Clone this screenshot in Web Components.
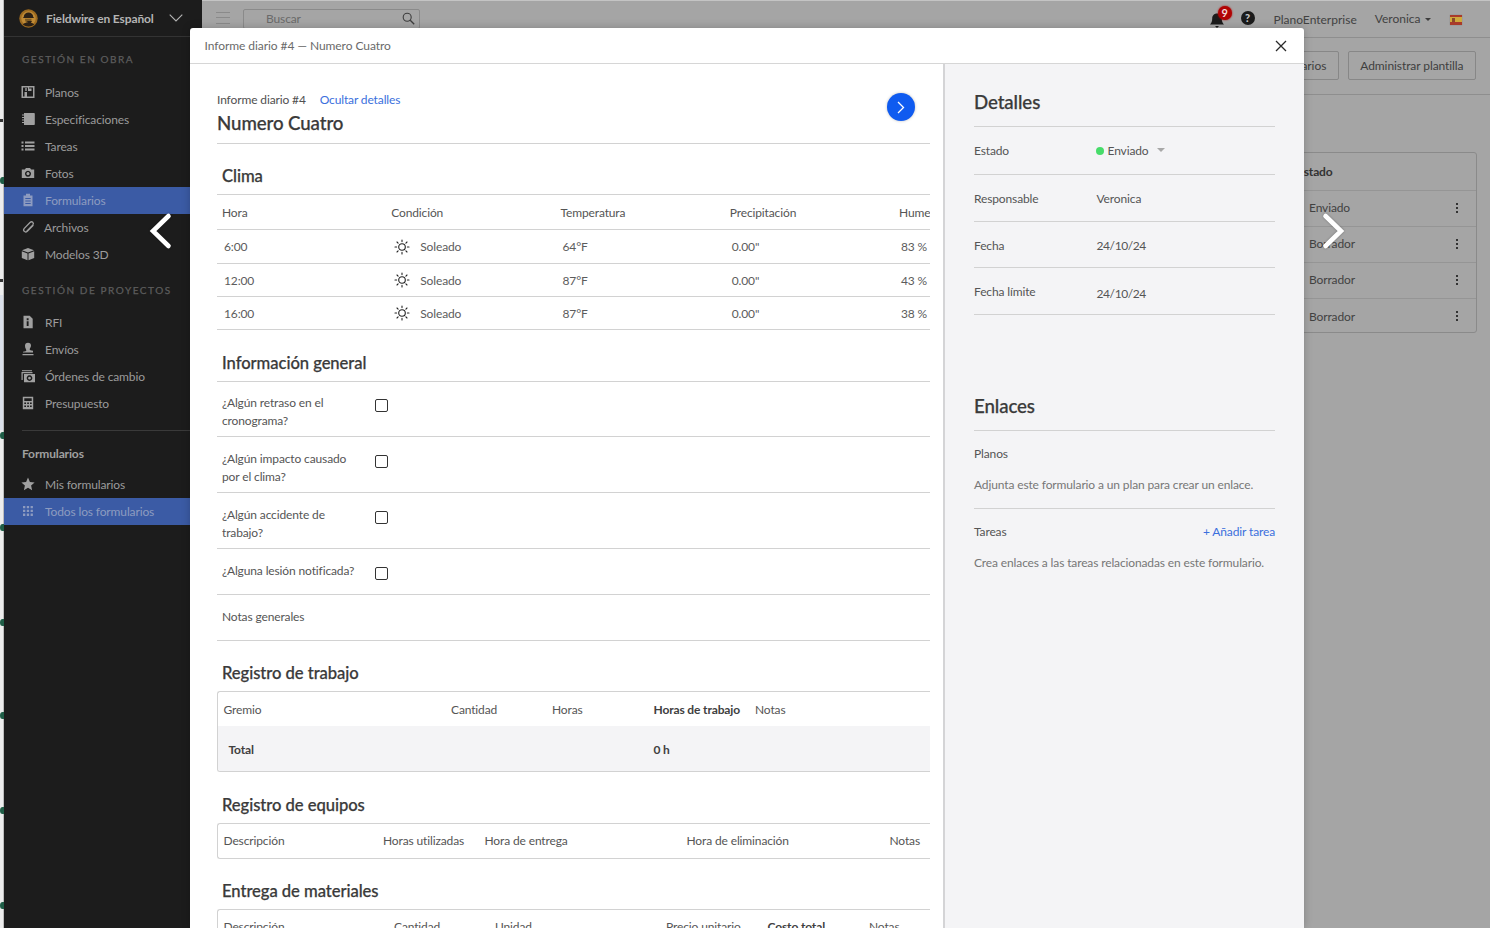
<!DOCTYPE html>
<html lang="es"><head><meta charset="utf-8"><title>Fieldwire</title>
<style>
html,body{margin:0;padding:0;height:928px;overflow:hidden;background:#a5a5a5}
body{font-family:Lato,"Liberation Sans",sans-serif;font-size:12px;color:#555;letter-spacing:-.13px}
</style></head>
<body>
<fw-app>
  <fw-sidebar slot="side">
    <fw-nav-title>GESTIÓN EN OBRA</fw-nav-title>
    <fw-nav-item icon="plans">Planos</fw-nav-item>
    <fw-nav-item icon="specs">Especificaciones</fw-nav-item>
    <fw-nav-item icon="tasks">Tareas</fw-nav-item>
    <fw-nav-item icon="photo">Fotos</fw-nav-item>
    <fw-nav-item icon="forms" active>Formularios</fw-nav-item>
    <fw-nav-item icon="clip" tight>Archivos</fw-nav-item>
    <fw-nav-item icon="cube">Modelos 3D</fw-nav-item>
    <fw-nav-title second>GESTIÓN DE PROYECTOS</fw-nav-title>
    <fw-nav-item icon="rfi">RFI</fw-nav-item>
    <fw-nav-item icon="stamp">Envíos</fw-nav-item>
    <fw-nav-item icon="change">Órdenes de cambio</fw-nav-item>
    <fw-nav-item icon="calc">Presupuesto</fw-nav-item>
    <fw-nav-group>Formularios</fw-nav-group>
    <fw-nav-item icon="star">Mis formularios</fw-nav-item>
    <fw-nav-item icon="grid" active>Todos los formularios</fw-nav-item>
  </fw-sidebar>
  <fw-backdrop slot="main"></fw-backdrop>
  <fw-modal slot="over">
    <span slot="crumb">Informe diario #4 — Numero Cuatro</span>
    <fw-form-pane slot="left">
      <fw-heading first>Clima</fw-heading>
      <fw-table flush>
        <fw-row h="34" cols="169.25px 169.25px 169.25px 169.25px 169.25px" line><span>Hora</span><span>Condición</span><span>Temperatura</span><span>Precipitación</span><span>Humedad</span></fw-row>
        <fw-row h="33" value cols="169.25px 169.25px 169.25px 169.25px 169.25px" line><span>6:00</span><span><fw-sun></fw-sun>Soleado</span><span>64°F</span><span>0.00"</span><span>83 %</span></fw-row>
        <fw-row h="32" value cols="169.25px 169.25px 169.25px 169.25px 169.25px" line><span>12:00</span><span><fw-sun></fw-sun>Soleado</span><span>87°F</span><span>0.00"</span><span>43 %</span></fw-row>
        <fw-row h="32" value cols="169.25px 169.25px 169.25px 169.25px 169.25px" line><span>16:00</span><span><fw-sun></fw-sun>Soleado</span><span>87°F</span><span>0.00"</span><span>38 %</span></fw-row>
      </fw-table>
      <fw-heading>Información general</fw-heading>
      <fw-table flush>
        <fw-check h="54" pad="12" box="17">¿Algún retraso en el cronograma?</fw-check>
        <fw-check h="55" box="18">¿Algún impacto causado por el clima?</fw-check>
        <fw-check h="55" box="18">¿Algún accidente de trabajo?</fw-check>
        <fw-check h="45" box="18">¿Alguna lesión notificada?</fw-check>
        <fw-check h="45" nobox>Notas generales</fw-check>
      </fw-table>
      <fw-heading tight>Registro de trabajo</fw-heading>
      <fw-table boxed>
        <fw-row h="34" boxed cols="227.5px 101px 101.5px 101.5px 1fr"><span>Gremio</span><span>Cantidad</span><span>Horas</span><b>Horas de trabajo</b><span>Notas</span></fw-row>
        <fw-row h="45" boxed total cols="430px 1fr"><b style="padding-left:5px">Total</b><b>0 h</b></fw-row>
      </fw-table>
      <fw-heading>Registro de equipos</fw-heading>
      <fw-table boxed>
        <fw-row h="34" boxed up cols="159.5px 101.5px 202px 203px 1fr"><span>Descripción</span><span>Horas utilizadas</span><span>Hora de entrega</span><span>Hora de eliminación</span><span>Notas</span></fw-row>
      </fw-table>
      <fw-heading tight>Entrega de materiales</fw-heading>
      <fw-table boxed>
        <fw-row h="34" boxed up cols="170.5px 101px 171px 101.5px 101.5px 1fr"><span>Descripción</span><span>Cantidad</span><span>Unidad</span><span>Precio unitario</span><b>Costo total</b><span>Notas</span></fw-row>
      </fw-table>
    </fw-form-pane>
    <fw-details-pane slot="right">
      <fw-side-title>Detalles</fw-side-title>
      <fw-detail h="47" label="Estado"><fw-status>Enviado</fw-status></fw-detail>
      <fw-detail h="46" label="Responsable">Veronica</fw-detail>
      <fw-detail h="45" label="Fecha" shift="2" date>24/10/24</fw-detail>
      <fw-detail h="46" label="Fecha límite" lshift="0" shift="2" vshift="3" date>24/10/24</fw-detail>
      <fw-side-title links>Enlaces</fw-side-title>
      <fw-link-block label="Planos">Adjunta este formulario a un plan para crear un enlace.</fw-link-block>
      <fw-link-block label="Tareas" action="+ Añadir tarea" last>Crea enlaces a las tareas relacionadas en este formulario.</fw-link-block>
    </fw-details-pane>
  </fw-modal>
  <fw-chevron slot="over" dir="left"></fw-chevron>
  <fw-chevron slot="over" dir="right"></fw-chevron>
</fw-app>
<script>
const ICONS={
plans:'<path fill-rule="evenodd" d="M.5 1h13v12H.5zM2 2.500v9h1.500V7H6v4.500h6V2.500H8v1h2.500V6H7V2.500z"/><path d="M4 3h2v3H4z" opacity=".7"/>',
specs:'<path d="M3 1h10a.8.8 0 0 1 .8.8v10.400a.8.8 0 0 1-.8.8H3zM1 2.500h2.500v1H1zM1 5h2.500v1H1zM1 7.500h2.500v1H1zM1 10h2.500v1H1z"/>',
tasks:'<path d="M.5 2.500h2v2h-2zM4 2.500h9.500v2H4zM.5 6h2v2h-2zM4 6h9.500v2H4zM.5 9.500h2v2h-2zM4 9.500h9.500v2H4z"/>',
photo:'<path fill-rule="evenodd" d="M.8 3.500h3L5 2h4l1.200 1.500h3V12H.8zM7 4.700a3 3 0 1 0 .01 0zM7 6.100a1.600 1.600 0 1 1-.01 0z"/>',
forms:'<path fill-rule="evenodd" d="M2.500 2.500h2.500V.8h4v1.700h2.500V13.300h-9zM4.300 5v1h5.400V5zM4.300 7.500v1h5.400v-1zM4.300 10v1h5.400v-1z"/>',
clip:'<path fill="none" stroke="currentColor" stroke-width="1.300" stroke-linecap="round" d="M12 5.500 6.300 11.200c-2.200 2-4.900-.6-3-2.800L9 2.500c2-1.800 4.500.5 2.700 2.600L6 11"/>',
cube:'<path d="M7 1 13 3.200 7 5.500 1 3.200zM.8 4.200l5.700 2.200V13.200L.8 11zM13.200 4.200 7.500 6.400V13.200l5.700-2.200z"/>',
rfi:'<path fill-rule="evenodd" d="M2.500 .8h6.200l3 3V13.200H2.500zM5.700 3.300v1.900h1.900V3.300zM5.700 6.300V11h1.900V6.300z"/>',
stamp:'<path d="M7 .8a3 3 0 0 1 3 3c0 1.600-1.300 2.300-1.300 3.600 0 .7 1.200.9 3.300 1.300v1.800H2V9.700c2.100-.4 3.300-.6 3.300-1.300C5.300 7.100 4 6.400 4 3.800a3 3 0 0 1 3-3zM1.500 12h11v1.200h-11z"/>',
change:'<path fill-rule="evenodd" d="M.5 3h11v1.200H1.700V11H.5zM3 5h11v8.200H3zM8.500 6.300a2.800 2.800 0 1 0 .01 0zM8.500 7.700a1.400 1.400 0 1 1-.01 0z"/><path d="M1 1.200h10v1H1z"/>',
calc:'<path fill-rule="evenodd" d="M1.800 .8h10.400V13.200H1.800zM3.300 2.300V5h7.400V2.300zM3.300 6.500V8h1.700V6.500zM6.200 6.500V8h1.700V6.500zM9 6.500V8h1.700V6.500zM3.300 9.500V11h1.700V9.500zM6.200 9.500V11h1.700V9.500zM9 9.500V11h1.700V9.500z"/>',
star:'<path d="M7 .6 8.900 5l4.700.5-3.500 3.100 1 4.600L7 10.800 2.900 13.200l1-4.600L.4 5.500 5.100 5z"/>',
grid:'<path d="M2 2h2.300v2.300H2zM5.800 2h2.300v2.300H5.800zM9.600 2h2.300v2.300H9.600zM2 5.800h2.300v2.300H2zM5.800 5.800h2.300v2.300H5.800zM9.600 5.800h2.300v2.300H9.600zM2 9.600h2.300v2.300H2zM5.800 9.600h2.300v2.300H5.800zM9.600 9.600h2.300v2.300H9.600z"/>'
};
function shadow(el,html){const r=el.attachShadow({mode:'open'});r.innerHTML=html;return r}

class FwApp extends HTMLElement{constructor(){super();shadow(this,`<style>
:host{display:grid;grid-template-columns:4px 198px 1fr;height:928px;position:relative;overflow:hidden}
.edge{background:linear-gradient(90deg,#ededed 0 3px,#bdbdbd 3px);position:relative;overflow:hidden}
.edge i{position:absolute;left:0;width:5px;height:7px;background:#1f5e47;border-radius:50% 0 0 50%}
.edge u{position:absolute;left:0;top:295px;width:3px;height:135px;background:#dbe0ea}
.edge s{position:absolute;left:0;width:3px;background:#333;height:3px}
</style>
<div class="edge"><u></u><s style="top:119px"></s><s style="top:279px"></s>
${[177,432,524,619,712,807,902].map(y=>`<i style="top:${y}px"></i>`).join('')}</div>
<slot name="side"></slot><slot name="main"></slot><slot name="over"></slot>`)}}
customElements.define('fw-app',FwApp);

class FwSidebar extends HTMLElement{constructor(){super();shadow(this,`<style>
:host{display:block;background:#1c1c1c;height:928px;color:#a0a0a0}
header{height:36px;border-bottom:1px solid #333;display:flex;align-items:center;padding-left:15px;gap:8px;box-sizing:content-box}
b{font-weight:700;font-size:12px;color:#b4b4b4;letter-spacing:-.12px;white-space:nowrap}
svg.c{margin-left:7px}
</style>
<header>
<svg width="19" height="19" viewBox="0 0 19 19"><circle cx="9.500" cy="9.500" r="9.200" fill="#9d6a1f"/><circle cx="9.500" cy="9.500" r="7.200" fill="#c08a35"/><path d="M4.800 8C4.800 5 7 3.400 9.500 3.400S14.200 5 14.200 8l1 .9H3.800z" fill="#2c2116"/><path d="M6 9.800h6.500c.3 2.600-.8 4.300-3 4.300S5.800 12.400 6 9.800z" fill="#7c5a22"/><path d="M8 12h5l-1.500 2.500h-2z" fill="#2c2116"/><path d="M3.800 15.500c1.200-1.300 3-1.900 5.700-1.900s4.500.6 5.700 1.900c-3 2.600-8.400 2.600-11.400 0z" fill="#2c2116"/></svg>
<b>Fieldwire en Español</b>
<svg class="c" width="14" height="8" viewBox="0 0 14 8"><path d="M.7.700 7 7 13.300.700" fill="none" stroke="#b4b4b4" stroke-width="1.100"/></svg>
</header><slot></slot>`)}}
customElements.define('fw-sidebar',FwSidebar);

class FwNavTitle extends HTMLElement{constructor(){super();shadow(this,`<style>
:host{display:flex;align-items:center;height:42px;padding:2px 0 0 18px;box-sizing:border-box;font-size:10px;font-weight:400;-webkit-text-stroke:.25px #5d5d5d;letter-spacing:1.55px;color:#5d5d5d;white-space:nowrap}
:host([second]){height:41px;padding-top:3px}
</style><slot></slot>`)}}
customElements.define('fw-nav-title',FwNavTitle);

class FwNavGroup extends HTMLElement{constructor(){super();shadow(this,`<style>
:host{display:block;margin:13px 5px 0 18px;border-top:1px solid #3a3a3a;padding-top:15px;height:25px;line-height:16px;font-weight:700;font-size:12px;color:#a0a0a0}
</style><slot></slot>`)}}
customElements.define('fw-nav-group',FwNavGroup);

class FwNavItem extends HTMLElement{constructor(){super();const ic=ICONS[this.getAttribute('icon')]||'';shadow(this,`<style>
:host{display:flex;align-items:center;height:27px;padding-left:17px;gap:10px;font-size:12px;color:#9b9b9b;white-space:nowrap}
:host([tight]){gap:9px}
:host([active]){background:#3b5ba5;color:#8d9bc0}
:host([active]) svg{color:#8d9bc0}
svg{width:14px;height:14px;color:#a0a0a0;flex:none;margin-top:-2px}
</style><svg viewBox="0 0 14 14" fill="currentColor">${ic}</svg><span><slot></slot></span>`)}}
customElements.define('fw-nav-item',FwNavItem);

class FwBackdrop extends HTMLElement{constructor(){super();shadow(this,`<style>
:host{display:block;height:928px;background:#a5a5a5;color:#424242;border-top:1px solid #c4c4c4;box-sizing:border-box;font-size:12px}
.top{height:36px;border-bottom:1px solid #8e8e8e;display:flex;align-items:center;padding-left:14px;box-sizing:content-box}
.burger{width:14px;height:10px;border-top:1px solid #8a8a8a;border-bottom:1px solid #8a8a8a;position:relative;margin-top:-2px}
.burger:after{content:"";position:absolute;left:0;right:0;top:4px;border-top:1px solid #8a8a8a}
.search{margin-left:13px;width:177px;height:20px;border:1px solid #8a8a8a;border-radius:2px;box-sizing:border-box;display:flex;align-items:center;justify-content:space-between;padding:0 4px 0 22px;color:#6a6a6a;margin-top:-1px;font-size:12px}
.right{margin-left:auto;display:flex;align-items:center}
.bell{position:relative;width:16px;height:18px;margin-right:16px;margin-top:3px}
.badge{position:absolute;left:9px;top:-6px;width:14px;height:14px;border-radius:50%;background:#b00404;color:#f4dada;font-size:11px;font-weight:700;text-align:center;line-height:14px;box-shadow:0 0 2px #b00404;letter-spacing:0}
.help{width:14px;height:14px;border-radius:50%;background:#1b1b1b;color:#c4c4c4;font-size:11px;font-weight:900;text-align:center;line-height:14px;margin-top:-2px;letter-spacing:0}
.plan{margin-left:19px;font-size:12px;letter-spacing:0}
.ver{margin-left:18px;margin-top:-2px;letter-spacing:0}
.caret{border:3px solid transparent;border-top:3px solid #3d3d3d;border-bottom:0;margin-left:4.500px;margin-top:1px}
.flag{width:12px;height:10px;margin:2px 28px 0 19px;background:linear-gradient(#a93a2a 0 25%,#cfa93c 25% 75%,#a93a2a 75%);box-shadow:0 0 1px #777;position:relative}
.flag:after{content:"";position:absolute;left:2px;top:3px;width:3px;height:4px;background:#8a4a2a}
.bar{height:57px;border-bottom:1px solid #8e8e8e;display:flex;justify-content:flex-end;align-items:flex-start;gap:9px;padding:13px 14px 0 0;box-sizing:border-box}
.btn{height:29px;border:1px solid #878787;border-radius:2px;display:flex;align-items:center;box-sizing:border-box;padding:0 11.500px;white-space:nowrap;color:#3f3f3f;letter-spacing:-.08px}
.tbl{margin:57px 13px 0 auto;width:500px;border:1px solid #8a8a8a;border-radius:3px;box-sizing:border-box;height:181px}
.r{height:36px;border-top:1px solid #959595;box-sizing:border-box;display:flex;align-items:center;padding:0 0 2px 331px;position:relative}
.r:first-child{height:37px;border-top:0;font-weight:700;padding:0 0 0 319px;color:#333}
.r:last-child{height:35px;padding-bottom:0}
.k{position:absolute;right:18px;top:12px;width:2px;height:2px;background:#333;box-shadow:0 4px #333,0 8px #333}
</style>
<div class="top">
  <div class="burger"></div>
  <div class="search"><span>Buscar</span>
  <svg width="13" height="13" viewBox="0 0 13 13"><circle cx="5.200" cy="5.200" r="4" fill="none" stroke="#3d3d3d" stroke-width="1.100"/><path d="m8.200 8.200 4 4" stroke="#3d3d3d" stroke-width="1.300"/></svg></div>
  <div class="right">
    <div class="bell"><svg width="16" height="18" viewBox="0 0 16 18"><path d="M8 1.500c3 0 4.800 2.200 4.800 5.200 0 3 1 4.300 2.200 5.800H1c1.200-1.500 2.200-2.800 2.200-5.800C3.200 3.700 5 1.500 8 1.500zM6 14h4l-2 2z" fill="#1b1b1b"/></svg><div class="badge">9</div></div>
    <div class="help">?</div>
    <span class="plan">PlanoEnterprise</span>
    <span class="ver">Veronica</span><span class="caret"></span>
    <div class="flag"></div>
  </div>
</div>
<div class="bar"><div class="btn">Todos los formularios</div><div class="btn">Administrar plantilla</div></div>
<div class="tbl">
  <div class="r">Estado</div>
  <div class="r">Enviado<i class="k"></i></div>
  <div class="r">Borrador<i class="k"></i></div>
  <div class="r">Borrador<i class="k"></i></div>
  <div class="r">Borrador<i class="k"></i></div>
</div>`)}}
customElements.define('fw-backdrop',FwBackdrop);

class FwModal extends HTMLElement{constructor(){super();shadow(this,`<style>
:host{position:absolute;left:190px;top:28px;width:1114px;height:900px;background:#fff;border-radius:3px 3px 0 0;box-shadow:0 0 9px rgba(0,0,0,.22);display:flex;flex-direction:column;color:#555}
.head{height:35px;flex:none;border-bottom:1px solid #d6d6d6;display:flex;align-items:center;justify-content:space-between;padding:0 17px 0 14.500px;color:#6a6a6a;font-size:12px;letter-spacing:-.06px;box-shadow:0 1px 2px rgba(0,0,0,.04)}
.body{flex:1;display:flex;min-height:0}
svg{display:block;margin-top:1px}
</style>
<div class="head"><slot name="crumb"></slot>
<svg width="12" height="12" viewBox="0 0 12 12"><path d="M1 1l10 10M11 1 1 11" stroke="#2a2a2a" stroke-width="1.300"/></svg></div>
<div class="body"><slot name="left"></slot><slot name="right"></slot></div>`)}}
customElements.define('fw-modal',FwModal);

class FwFormPane extends HTMLElement{constructor(){super();shadow(this,`<style>
:host{display:block;flex:none;box-sizing:border-box;padding:28px 13px 0 27px;overflow:hidden;background:#fff;border-right:2px solid #d4d4d6;width:755px}
.t{display:flex;justify-content:space-between;border-bottom:1px solid #d2d2d2;height:51px}
.t1{line-height:16px;font-size:12px;color:#505050}
a{color:#3b6fdd;margin-left:11px}
h1{margin:3px 0 0;font-size:18.700px;line-height:24px;font-weight:500;color:#3a3a3a;letter-spacing:-.1px;-webkit-text-stroke:.25px #3a3a3a}
.go{width:28px;height:28px;border-radius:50%;background:#0f5bf0;margin:1px 15px 0 0;box-shadow:0 0 3px rgba(0,0,0,.25);display:flex;align-items:center;justify-content:center}
</style>
<div class="t"><div><div class="t1">Informe diario #4 <a>Ocultar detalles</a></div><h1>Numero Cuatro</h1></div>
<div class="go"><svg width="8" height="13" viewBox="0 0 8 13"><path d="m1 1 5.500 5.500L1 12" fill="none" stroke="#fff" stroke-width="1.300"/></svg></div></div>
<slot></slot>`)}}
customElements.define('fw-form-pane',FwFormPane);

class FwHeading extends HTMLElement{constructor(){super();shadow(this,`<style>
:host{display:block;padding:21px 0 6px 5px;font-size:16.600px;line-height:24px;font-weight:500;color:#3a3a3a;letter-spacing:-.05px;-webkit-text-stroke:.25px #3a3a3a}
:host([first]),:host([tight]){padding-top:20px}
</style><slot></slot>`)}}
customElements.define('fw-heading',FwHeading);

class FwTable extends HTMLElement{constructor(){super();shadow(this,`<style>
:host{display:block;border-top:1px solid #d2d2d2;overflow:hidden}
:host([boxed]){border:1px solid #d2d2d2;border-right:0;border-radius:3px 0 0 3px}
</style><slot></slot>`)}}
customElements.define('fw-table',FwTable);

class FwRow extends HTMLElement{constructor(){super();shadow(this,`<style>
:host{display:grid;align-items:center;white-space:nowrap;font-size:12px;color:#555;box-sizing:content-box}
:host([line]){border-bottom:1px solid #d2d2d2}
:host([value]){color:#5c5c5c}
:host([total]){background:#f4f4f6;color:#444;padding-top:1px;box-sizing:border-box}
:host([up]){padding-bottom:2px;box-sizing:border-box}
</style><slot></slot>`);
this.style.gridTemplateColumns=this.getAttribute('cols');this.style.height=this.getAttribute('h')+'px';
[...this.children].forEach(c=>{c.style.marginLeft=this.hasAttribute('boxed')?'5.5px':(this.hasAttribute('value')?'7px':'5px');c.style.display='flex';c.style.alignItems='center';if(c.tagName==='B'){c.style.color='#404040'}})}}
customElements.define('fw-row',FwRow);

class FwSun extends HTMLElement{constructor(){super();shadow(this,`<style>:host{display:inline-block;width:16px;height:16px;margin:0 10px 0 1px}svg{display:block}</style>
<svg width="16" height="16" viewBox="0 0 16 16" fill="none" stroke="#222" stroke-width="1.100"><circle cx="8" cy="8" r="3.300"/><path stroke-linecap="round" d="M8 1v1.600M8 13.400V15M1 8h1.600M13.400 8H15M3 3l1.100 1.100M11.900 11.900 13 13M3 13l1.100-1.100M11.900 4.100 13 3"/></svg>`)}}
customElements.define('fw-sun',FwSun);

class FwCheck extends HTMLElement{constructor(){super();const p=this.getAttribute('pad')||13,b=this.getAttribute('box')||18,no=this.hasAttribute('nobox');shadow(this,`<style>
:host{display:flex;box-sizing:content-box;border-bottom:1px solid #d2d2d2;padding-left:5px;font-size:12px;line-height:18px;color:#555}
.l{width:135px;padding-top:${p}px}
:host([nobox]) .l{width:auto}
.b{width:13px;height:13px;border:1.500px solid #333;border-radius:2px;box-sizing:border-box;margin:${b}px 0 0 18px}
</style><div class="l"><slot></slot></div>${no?'':'<div class="b"></div>'}`);this.style.height=this.getAttribute('h')+'px'}}
customElements.define('fw-check',FwCheck);

class FwDetailsPane extends HTMLElement{constructor(){super();shadow(this,`<style>
:host{display:block;flex:1;background:#f4f4f6;padding:0 29px;box-sizing:border-box;color:#555}
</style><slot></slot>`)}}
customElements.define('fw-details-pane',FwDetailsPane);

class FwSideTitle extends HTMLElement{constructor(){super();shadow(this,`<style>
:host{display:block;padding:26px 0 12px;font-size:18.700px;line-height:24px;font-weight:500;color:#3a3a3a;border-bottom:1px solid #d2d2d2;letter-spacing:-.1px;-webkit-text-stroke:.25px #3a3a3a}
:host([links]){padding-top:79px}
</style><slot></slot>`)}}
customElements.define('fw-side-title',FwSideTitle);

class FwDetail extends HTMLElement{constructor(){super();const s=this.getAttribute('shift')||0,v=this.getAttribute('vshift')||0,ls=this.getAttribute('lshift');shadow(this,`<style>
:host{display:flex;border-bottom:1px solid #d2d2d2;align-items:center;font-size:12px;color:#555}
.l{width:122.500px;padding-top:${ls===null?+s:+ls}px}
.v{padding-top:${+s+ +v}px}
:host([date]) .v{letter-spacing:-.4px}
</style><div class="l">${this.getAttribute('label')}</div><div class="v"><slot></slot></div>`);this.style.height=this.getAttribute('h')+'px'}}
customElements.define('fw-detail',FwDetail);

class FwStatus extends HTMLElement{constructor(){super();shadow(this,`<style>
:host{display:flex;align-items:center;margin-left:-.5px}
i{width:8px;height:8px;border-radius:50%;background:#47dc6a;margin-right:3.500px}
u{border:4px solid transparent;border-top:4px solid #a8a8a8;border-bottom:0;margin-left:9px;margin-top:-1px}
</style><i></i><slot></slot><u></u>`)}}
customElements.define('fw-status',FwStatus);

class FwLinkBlock extends HTMLElement{constructor(){super();const act=this.getAttribute('action');shadow(this,`<style>
:host{display:block;padding-top:15px;padding-bottom:15px;border-bottom:1px solid #d2d2d2;font-size:12px;line-height:16px;color:#555}
:host([last]){border-bottom:0}
.h{display:flex;justify-content:space-between}
a{color:#3b6fdd}
.d{margin-top:15px;color:#777}
</style><div class="h"><span>${this.getAttribute('label')}</span>${act?`<a>${act}</a>`:''}</div><div class="d"><slot></slot></div>`)}}
customElements.define('fw-link-block',FwLinkBlock);

class FwChevron extends HTMLElement{constructor(){super();const l=this.getAttribute('dir')==='left';shadow(this,`<style>
:host{position:absolute;top:212px;left:${l?149:1321}px;width:24px;height:38px;filter:drop-shadow(0 0 1px rgba(0,0,0,.3))}
svg{display:block}
</style><svg width="24" height="38" viewBox="0 0 24 38"><path d="${l?'M19.500 4 4 19l15.500 15':'M4.500 4 20 19 4.500 34'}" fill="none" stroke="#fff" stroke-width="4.600" stroke-linecap="round" stroke-linejoin="miter"/></svg>`)}}
customElements.define('fw-chevron',FwChevron);
</script>
</body></html>
